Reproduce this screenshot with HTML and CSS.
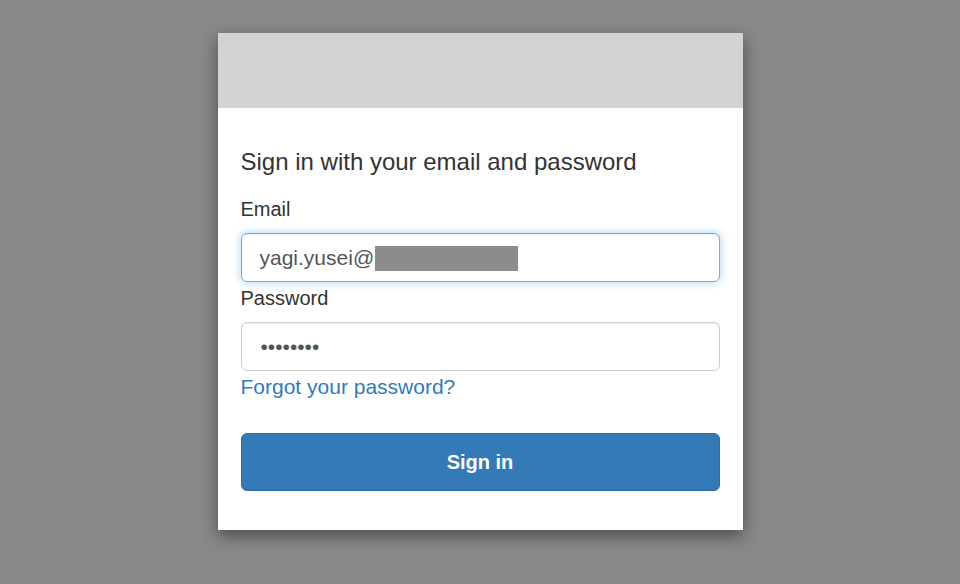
FILE: index.html
```html
<!DOCTYPE html>
<html lang="en">
<head>
<meta charset="utf-8">
<title>Sign in</title>
<link rel="stylesheet" href="styles.css">
</head>
<body>
<div class="modal">
  <div class="modal-header"></div>
  <div class="modal-body">
    <div class="title">Sign in with your email and password</div>
    <label class="label label-email" for="email">Email</label>
    <div class="field">
      <input class="input input-focus" id="email" type="text" value="yagi.yusei@">
      <span class="redact"></span>
    </div>
    <label class="label label-password" for="password">Password</label>
    <input class="input input-password" id="password" type="password" value="12345678">
    <a class="forgot" href="#">Forgot your password?</a>
    <button class="btn" type="button">Sign in</button>
  </div>
</div>
</body>
</html>
```
FILE: styles.css
```css
* { box-sizing: border-box; }
html, body { margin: 0; padding: 0; }
body {
  background: #898989;
  font-family: "Liberation Sans", Arial, sans-serif;
  color: #333;
  padding-top: 33px;
  height: 584px;
  overflow: hidden;
}
.modal {
  width: 525px;
  margin: 0 auto;
  background: #fff;
  box-shadow: 0 6px 16px rgba(0, 0, 0, 0.45);
}
.modal-header {
  height: 75px;
  background: #d3d3d3;
}
.modal-body {
  padding: 39px 23px 39px 23px;
  display: flex;
  flex-direction: column;
}
.title {
  font-size: 24px;
  line-height: 30px;
}
.label {
  font-size: 20px;
  line-height: 28px;
}
.label-email { margin-top: 18px; margin-bottom: 10px; }
.label-password { margin-top: 2px; margin-bottom: 10px; }
.field { position: relative; }
.input {
  display: block;
  width: 100%;
  height: 49px;
  border: 1px solid #ccc;
  border-radius: 6px;
  padding: 0 18px;
  font-family: "Liberation Sans", Arial, sans-serif;
  font-size: 21px;
  color: #555;
  background: #fff;
  outline: none;
  box-shadow: inset 0 1px 1px rgba(0, 0, 0, 0.075);
}
.input-focus {
  border-color: #66afe9;
  box-shadow: inset 0 1px 1px rgba(0, 0, 0, 0.075), 0 0 8px rgba(102, 175, 233, 0.6);
}
.input-password { padding-left: 19px; }
.redact {
  position: absolute;
  left: 134px;
  top: 13px;
  width: 143px;
  height: 25px;
  background: #8c8c8c;
}
.forgot {
  margin-top: 2px;
  font-size: 21px;
  line-height: 28px;
  color: #337ab7;
  text-decoration: none;
  align-self: flex-start;
}
.btn {
  margin-top: 32px;
  height: 58px;
  width: 100%;
  background: #337ab7;
  border: 1px solid #2e6da4;
  border-radius: 6px;
  color: #fff;
  font-family: "Liberation Sans", Arial, sans-serif;
  font-size: 20px;
  font-weight: bold;
  cursor: pointer;
}
```
